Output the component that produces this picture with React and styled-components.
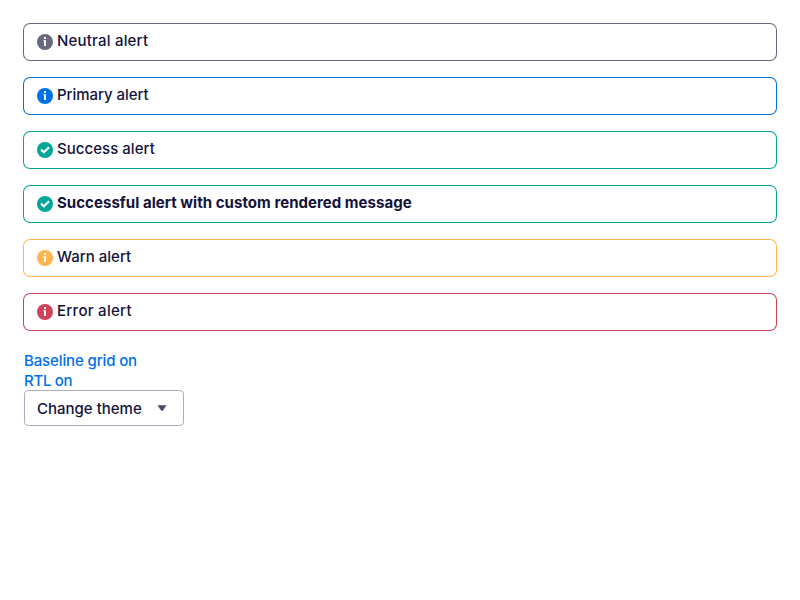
import React from "react";
import styled, { createGlobalStyle } from "styled-components";

const Global = createGlobalStyle`
  *, *::before, *::after { box-sizing: border-box; }
  body {
    margin: 0;
    background: #fff;
    color: #13133a;
    font-family: Inter, "Liberation Sans", sans-serif;
    font-size: 15px;
    line-height: 20px;
    -webkit-font-smoothing: antialiased;
  }
`;

const Page = styled.main`
  padding: 24px;
`;

const AlertList = styled.section`
  display: flex;
  flex-direction: column;
  gap: 18px;
  margin-bottom: 21px;
`;

const Alert = styled.div`
  display: flex;
  align-items: flex-start;
  gap: 4px;
  height: 36px;
  padding: 7px 13px;
  border-radius: 6px;
  box-shadow: 0 0 0 1px ${(p) => p.$color};
  color: ${(p) => p.$color};
`;

const Icon = styled.svg`
  flex: none;
  width: 16px;
  height: 16px;
  margin-top: 3px;
`;

const Message = styled.span`
  color: #13133a;
  white-space: nowrap;
  font-weight: ${(p) => (p.$bold ? 700 : 450)};
  letter-spacing: ${(p) => p.$tracking || "0"};
`;

const Links = styled.nav`
  display: flex;
  flex-direction: column;
  align-items: flex-start;
  margin-bottom: -1px;
`;

const LinkButton = styled.button`
  padding: 0;
  border: 0;
  background: none;
  color: #0070e5;
  font: inherit;
  font-weight: 500;
  letter-spacing: ${(p) => p.$tracking || "0"};
  cursor: pointer;
`;

const ThemeButton = styled.button`
  display: flex;
  align-items: center;
  justify-content: space-between;
  width: 160px;
  height: 36px;
  padding: 2px 16px 0 12px;
  border: 1px solid #adadbf;
  border-radius: 4px;
  background: #fff;
  color: #13133a;
  font: inherit;
  font-weight: 450;
  letter-spacing: ${(p) => p.$tracking || "0"};
  cursor: pointer;
`;

const Caret = styled.svg`
  width: 10px;
  height: 6px;
  margin-top: -2px;
`;

const InfoIcon = () => (
  <Icon viewBox="0 0 16 16">
    <circle cx="8" cy="8" r="8" fill="currentColor" />
    <path d="M7 3h2v2H7zM6.300 6.200H9V12H7V7.200h-.7z" fill="#fff" />
  </Icon>
);

const CheckIcon = () => (
  <Icon viewBox="0 0 16 16">
    <circle cx="8" cy="8" r="8" fill="currentColor" />
    <path d="M4.100 7.600 6.900 10.300 12 5.200" fill="none" stroke="#fff" strokeWidth="2.200" />
  </Icon>
);

const alerts = [
  { text: "Neutral alert", color: "#69697d", icon: InfoIcon, tracking: "0.2px" },
  { text: "Primary alert", color: "#0070e5", icon: InfoIcon, tracking: "-0.04px" },
  { text: "Success alert", color: "#00a698", icon: CheckIcon, tracking: "0.04px" },
  {
    text: "Successful alert with custom rendered message",
    color: "#00a698",
    icon: CheckIcon,
    bold: true,
    tracking: "0.04px",
  },
  { text: "Warn alert", color: "#ffb54d", icon: InfoIcon, tracking: "0" },
  { text: "Error alert", color: "#d1415a", icon: InfoIcon, tracking: "0.28px" },
];

export default function App() {
  return (
    <>
      <Global />
      <Page>
        <AlertList>
          {alerts.map(({ text, color, icon: Glyph, bold, tracking }) => (
            <Alert key={text} role="alert" $color={color}>
              <Glyph />
              <Message $bold={bold} $tracking={tracking}>{text}</Message>
            </Alert>
          ))}
        </AlertList>
        <Links>
          <LinkButton $tracking="-0.13px">Baseline grid on</LinkButton>
          <LinkButton $tracking="-0.3px">RTL on</LinkButton>
        </Links>
        <ThemeButton $tracking="0">
          Change theme
          <Caret viewBox="0 0 10 6">
            <path d="M1 .5h8L5.8 5.2Q5 6 4.200 5.200L1 .5Z" fill="#4b4b66" stroke="#4b4b66" strokeWidth=".6" strokeLinejoin="round" />
          </Caret>
        </ThemeButton>
      </Page>
    </>
  );
}
